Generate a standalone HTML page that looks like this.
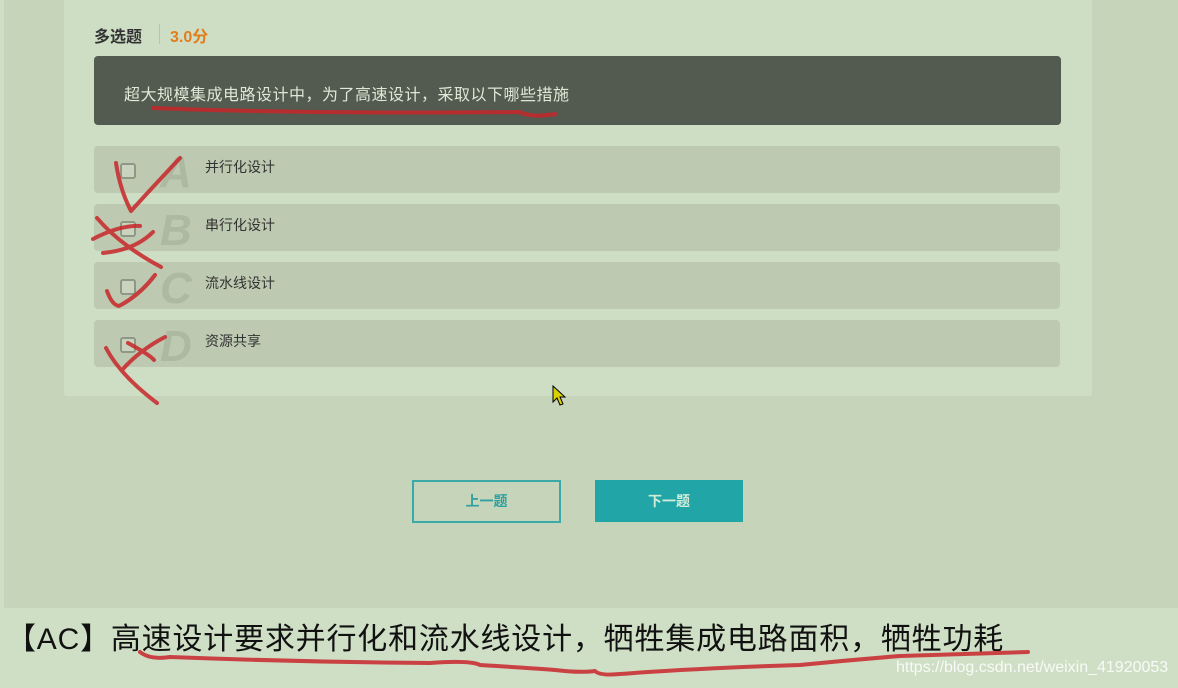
<!DOCTYPE html>
<html><head><meta charset="utf-8"><style>
body{margin:0;width:1178px;height:688px;overflow:hidden;background:#c6d5b9;font-family:"Liberation Sans","Noto Sans CJK SC",sans-serif;position:relative}
.abs{position:absolute}
.card{left:64px;top:0;width:1028px;height:396px;background:#cedec4;border-radius:0 0 3px 3px}
.row{left:94px;width:966px;height:47px;background:#bdc9b0;border-radius:4px}
.cb{left:26px;top:17px;width:12px;height:12px;border:2px solid #8f9787;border-radius:3px;background:#c9d3bd}
.let{left:66px;top:2px;font-size:44px;font-style:italic;font-weight:bold;color:#adb9a1}
.txt{left:111px;top:11px;font-size:14px;color:#333}
</style></head><body>
<div class="abs" style="left:0;top:0;width:4px;height:608px;background:#cfdec4"></div>
<div class="abs card"></div>
<div class="abs" style="left:94px;top:23px;font-size:16px;font-weight:bold;color:#333">多选题</div>
<div class="abs" style="left:159px;top:24px;width:1px;height:20px;background:#b8c4ac"></div>
<div class="abs" style="left:170px;top:23px;font-size:16px;font-weight:bold;color:#e07e1e">3.0分</div>
<div class="abs" style="left:94px;top:56px;width:967px;height:69px;background:#535a4f;border-radius:4px"></div>
<div class="abs" style="left:124px;top:81px;font-size:16px;letter-spacing:0.5px;color:#dfe7d6;white-space:nowrap">超大规模集成电路设计中，为了高速设计，采取以下哪些措施</div>
<div class="abs row" style="top:146px"><div class="abs cb"></div><div class="abs let">A</div><div class="abs txt">并行化设计</div></div>
<div class="abs row" style="top:204px"><div class="abs cb"></div><div class="abs let">B</div><div class="abs txt">串行化设计</div></div>
<div class="abs row" style="top:262px"><div class="abs cb"></div><div class="abs let">C</div><div class="abs txt">流水线设计</div></div>
<div class="abs row" style="top:320px"><div class="abs cb"></div><div class="abs let">D</div><div class="abs txt">资源共享</div></div>
<div class="abs" style="left:412px;top:480px;width:145px;height:39px;border:2px solid #3aaaa8;color:#2ea0a0;font-size:14px;font-weight:bold;text-align:center;line-height:39px">上一题</div>
<div class="abs" style="left:595px;top:480px;width:148px;height:42px;background:#22a5a6;color:#d2ecd8;font-size:14px;font-weight:bold;text-align:center;line-height:42px">下一题</div>
<div class="abs" style="left:0;top:608px;width:1178px;height:80px;background:#cfdfc5"></div>
<div class="abs" style="left:6px;top:614px;font-size:30px;letter-spacing:0.8px;color:#111;white-space:nowrap">【AC】高速设计要求并行化和流水线设计，牺牲集成电路面积，牺牲功耗</div>
<div class="abs" style="left:896px;top:659px;font-size:16px;color:#fff;opacity:.85;white-space:nowrap">https://blog.csdn.net/weixin_41920053</div>
<svg class="abs" style="left:0;top:0" width="1178" height="688"><g fill="none" stroke="#c8262a" stroke-width="4" stroke-linecap="round" stroke-linejoin="round" opacity=".85">
<path d="M153 108 Q300 114 520 112 Q530 118 555 114"/>
<path d="M116 163 Q120 190 131 211 Q150 190 180 158"/>
<path d="M97 218 Q120 245 161 267"/>
<path d="M93 239 Q120 225 140 226 M103 253 Q135 250 153 232"/>
<path d="M107 291 Q112 305 119 306 Q140 295 155 275"/>
<path d="M106 348 Q120 375 157 403 M128 343 Q150 355 154 360 M123 369 Q140 350 165 337"/>
<path d="M140 652 Q150 660 170 657 Q300 662 430 663 Q470 660 480 665 Q530 668 555 670 Q580 673 595 671 Q600 676 620 674 Q700 668 800 665 Q850 660 900 656 Q960 654 1028 652"/>
</g></svg>
<svg class="abs" style="left:552px;top:385px" width="14" height="22"><path d="M1 1 L1 17 L5 13 L8 20 L11 19 L8 12 L13 12 Z" fill="#d8d000" stroke="#000" stroke-width="1"/></svg>
</body></html>
